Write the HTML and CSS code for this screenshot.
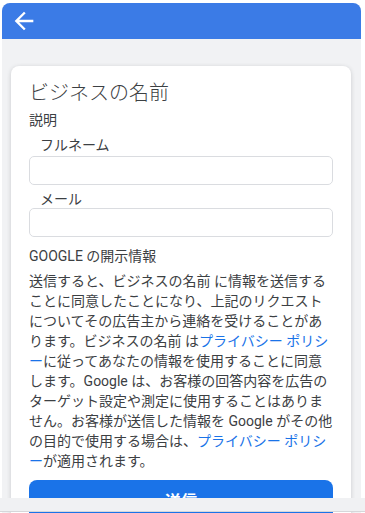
FILE: index.html
```html
<!doctype html>
<html lang="ja">
  <head>
    <meta charset="UTF-8" />
    <meta name="viewport" content="width=device-width, initial-scale=1.0" />
    <title>ビジネスの名前</title>
    <link rel="stylesheet" href="styles.css">
  </head>

  <body>
    <div class="frame">
      <header class="topbar">
        <svg class="back" viewBox="0 0 24 24" width="28" height="28" aria-hidden="true">
          <path d="M20 11H7.83l5.59-5.59L12 4l-8 8 8 8 1.41-1.41L7.83 13H20v-2z" fill="#fff" />
        </svg>
      </header>
      <main class="content">
        <form class="card">
          <h1 class="card-title">ビジネスの名前</h1>
          <p class="desc">説明</p>
          <label class="field-label" for="name">フルネーム</label>
          <input class="field" id="name" type="text" />
          <label class="field-label mail" for="mail">メール</label>
          <input class="field" id="mail" type="email" />
          <h2 class="disclosure-title">GOOGLE の開示情報</h2>
          <p class="disclosure">送信すると、ビジネスの名前 に情報を送信することに同意したことになり、上記のリクエストについてその広告主から連絡を受けることがあります。ビジネスの名前 は<a href="#">プライバシー ポリシー</a>に従ってあなたの情報を使用することに同意します。Google は、お客様の回答内容を広告のターゲット設定や測定に使用することはありません。お客様が送信した情報を Google がその他の目的で使用する場合は、<a href="#">プライバシー ポリシー</a>が適用されます。</p>
          <button class="submit" type="button">送信</button>
        </form>
      </main>
    </div>
    <div class="bottom-bar"></div>
  </body>
</html>
```
FILE: styles.css
```css
* {
  margin: 0;
  padding: 0;
  box-sizing: border-box;
}
:root {
  --topbar-blue: #3b7be6;
  --page-gray: #f1f2f4;
  --text-color: #3c4043;
  --line-color: #dadce0;
  --link-color: #1a73e8;
}
html,
body {
  height: 100%;
}
body {
  background-color: #fff;
  color: var(--text-color);
  font-family: Roboto, "Noto Sans CJK JP", sans-serif;
  overflow: hidden;
}
.frame {
  display: flex;
  flex-direction: column;
  width: 359px;
  height: calc(100% - 3px);
  margin: 3px 0 0 2px;
  border-radius: 8px 8px 0 0;
  overflow: hidden;
  background-color: var(--page-gray);
}
.topbar {
  display: flex;
  align-items: center;
  height: 36px;
  padding-left: 8px;
  background-color: var(--topbar-blue);
  flex-shrink: 0;
}
.topbar .back {
  display: block;
}
.content {
  padding: 27px 10px 0 9px;
}
.card {
  display: flex;
  flex-direction: column;
  padding: 14px 18px 20px;
  border-radius: 8px;
  background-color: #fff;
  box-shadow: 0 1px 4px rgba(60, 64, 67, 0.22);
}
.card-title {
  font-size: 20px;
  font-weight: 300;
  line-height: 26px;
}
.desc {
  margin-top: 4px;
  font-size: 14px;
  line-height: 20px;
}
.field-label {
  margin-top: 6px;
  padding-left: 11px;
  font-size: 14px;
  line-height: 18px;
}
.field-label.mail {
  margin-top: 5px;
}
.field {
  height: 29px;
  margin-top: 2px;
  border: 1px solid var(--line-color);
  border-radius: 5px;
  background: #fff;
}
.field + .field-label + .field {
  margin-top: 0;
}
.disclosure-title {
  margin-top: 9px;
  font-size: 14px;
  font-weight: 400;
  line-height: 20px;
}
.disclosure {
  margin-top: 5px;
  font-size: 14px;
  line-height: 20px;
}
.disclosure a {
  color: var(--link-color);
  text-decoration: none;
}
.submit {
  height: 40px;
  margin-top: 9px;
  border: none;
  border-radius: 8px;
  background-color: var(--link-color);
  color: #fff;
  font-family: inherit;
  font-size: 16px;
  font-weight: 700;
}
.bottom-bar {
  position: fixed;
  left: 0;
  right: 0;
  bottom: 1px;
  height: 14px;
  background-color: #f0f1f3;
  border-bottom: 1px solid #d6d7da;
}
```
